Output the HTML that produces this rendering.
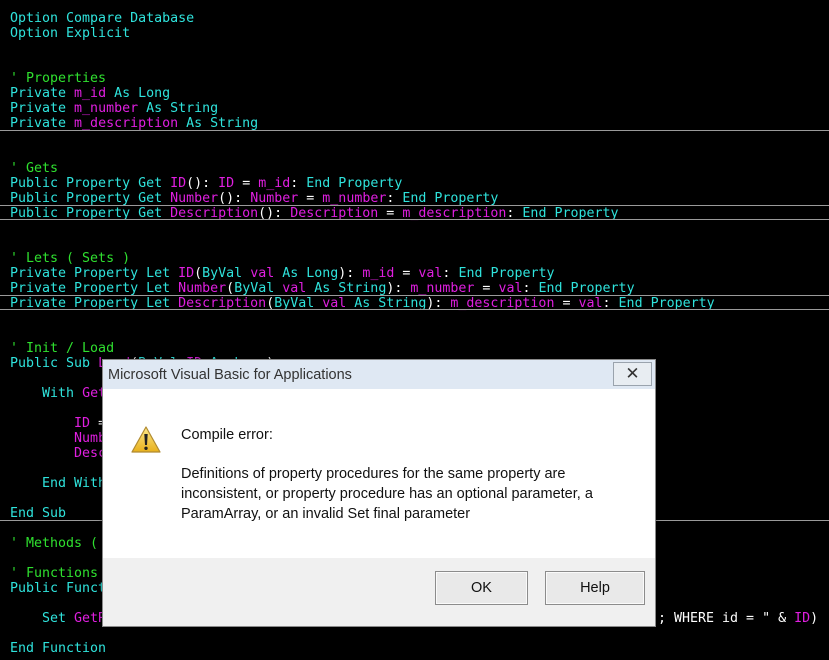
<!DOCTYPE html>
<html><head><meta charset="utf-8"><style>
body{margin:0;width:829px;height:660px;background:#000;overflow:hidden;position:relative;font-family:"DejaVu Sans Mono","Liberation Mono",monospace;}
#code{position:absolute;left:10px;top:11px;font-size:13.3px;line-height:15px;white-space:pre;color:#2fe3dc;}
.m{color:#e01fe0}.g{color:#2fe02f}.w{color:#fff}
.sep{position:absolute;left:0;width:829px;height:1px;background:#9a9a9a;}
#dlg{position:absolute;left:102px;top:359px;width:552px;height:266px;background:#fff;border:1px solid #8a8a8a;box-shadow:0 0 4px rgba(0,0,0,.5);font-family:"Liberation Sans",sans-serif;}
#title{height:29px;background:#dfe8f3;font-size:14.5px;color:#333;line-height:30px;padding-left:5px;position:relative;}
#close{position:absolute;right:3px;top:2px;width:37px;height:22px;border:1px solid #9aa3ad;background:#e8edf2;text-align:center;line-height:22px;font-size:17px;color:#333;}
#foot{position:absolute;left:0;top:198px;width:552px;height:68px;background:#f0f0f0;}
.btn{position:absolute;top:13px;height:32px;border:1px solid #8c8c8c;background:#e9e9e9;text-align:center;line-height:32px;font-size:14.5px;color:#111;box-shadow:inset 0 0 0 1px #fafafa;}
.t{position:absolute;left:78px;font-size:14.5px;color:#111;line-height:20px;}
</style></head><body>
<div id="code">Option Compare Database
Option Explicit


<span class="g">' Properties</span>
Private <span class="m">m_id</span> As Long
Private <span class="m">m_number</span> As String
Private <span class="m">m_description</span> As String


<span class="g">' Gets</span>
Public Property Get <span class="m">ID</span><span class="w">():</span> <span class="m">ID</span> <span class="w">=</span> <span class="m">m_id</span><span class="w">:</span> End Property
Public Property Get <span class="m">Number</span><span class="w">():</span> <span class="m">Number</span> <span class="w">=</span> <span class="m">m_number</span><span class="w">:</span> End Property
Public Property Get <span class="m">Description</span><span class="w">():</span> <span class="m">Description</span> <span class="w">=</span> <span class="m">m_description</span><span class="w">:</span> End Property


<span class="g">' Lets ( Sets )</span>
Private Property Let <span class="m">ID</span><span class="w">(</span>ByVal <span class="m">val</span> As Long<span class="w">):</span> <span class="m">m_id</span> <span class="w">=</span> <span class="m">val</span><span class="w">:</span> End Property
Private Property Let <span class="m">Number</span><span class="w">(</span>ByVal <span class="m">val</span> As String<span class="w">):</span> <span class="m">m_number</span> <span class="w">=</span> <span class="m">val</span><span class="w">:</span> End Property
Private Property Let <span class="m">Description</span><span class="w">(</span>ByVal <span class="m">val</span> As String<span class="w">):</span> <span class="m">m_description</span> <span class="w">=</span> <span class="m">val</span><span class="w">:</span> End Property


<span class="g">' Init / Load</span>
Public Sub <span class="m">Load</span><span class="w">(</span>ByVal <span class="m">ID</span> As Long<span class="w">)</span>

    With <span class="m">GetRecord</span>

        <span class="m">ID</span> <span class="w">=</span>
        <span class="m">Number</span>
        <span class="m">Description</span>

    End With

End Sub

<span class="g">' Methods ( Subs )</span>

<span class="g">' Functions</span>
Public Function

    Set <span class="m">GetRecord</span>

End Function</div>
<div style="position:absolute;left:658px;top:611px;font-size:13.3px;line-height:15px;white-space:pre;color:#fff;">; WHERE id = " &amp; <span class="m">ID</span>)</div>
<div class="sep" style="top:130px"></div>
<div class="sep" style="top:205px"></div>
<div class="sep" style="top:219px"></div>
<div class="sep" style="top:295px"></div>
<div class="sep" style="top:309px"></div>
<div class="sep" style="top:520px"></div>
<div id="dlg">
 <div id="title">Microsoft Visual Basic for Applications<div id="close">&#x2715;</div></div>
 <svg style="position:absolute;left:28px;top:66px" width="30" height="28" viewBox="0 0 30 28">
  <defs><linearGradient id="y" x1="0" y1="0" x2="0" y2="1"><stop offset="0" stop-color="#fde98a"/><stop offset="1" stop-color="#e8b01c"/></linearGradient></defs>
  <path d="M15 1 L29 26 L1 26 Z" fill="url(#y)" stroke="#b08a30" stroke-width="1.2" stroke-linejoin="round"/>
  <path d="M13.3 8 L16.7 8 L16 19 L14 19 Z" fill="#222"/>
  <circle cx="15" cy="22.3" r="1.7" fill="#222"/>
 </svg>
 <div class="t" style="top:65px">Compile error:</div>
 <div class="t" style="top:104px">Definitions of property procedures for the same property are<br>inconsistent, or property procedure has an optional parameter, a<br>ParamArray, or an invalid Set final parameter</div>
 <div id="foot">
  <div class="btn" style="left:332px;width:91px">OK</div>
  <div class="btn" style="left:442px;width:98px">Help</div>
 </div>
</div>
</body></html>
